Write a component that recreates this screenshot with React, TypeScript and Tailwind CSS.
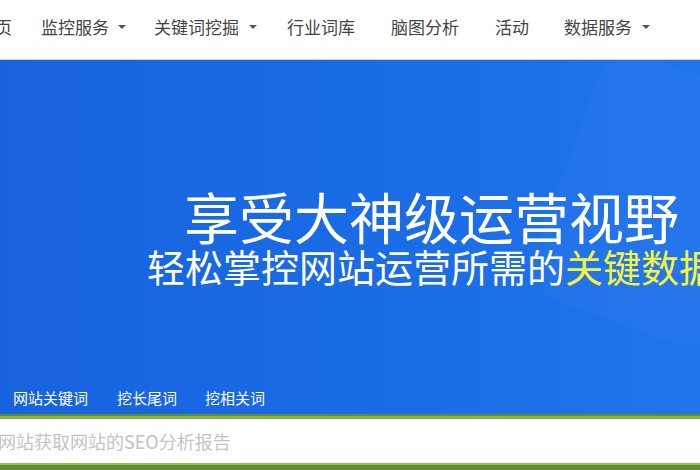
import React from "react";

const font = { fontFamily: '"Noto Sans CJK SC", "Noto Sans", sans-serif' };

const navItems = [
  { label: "首页", ml: "ml-[-22px]", caret: false, caretMl: "" },
  { label: "监控服务", ml: "ml-[29px]", caret: true, caretMl: "ml-[9px]" },
  { label: "关键词挖掘", ml: "ml-[28px]", caret: true, caretMl: "ml-[10px]" },
  { label: "行业词库", ml: "ml-[30px]", caret: false, caretMl: "" },
  { label: "脑图分析", ml: "ml-[36px]", caret: false, caretMl: "" },
  { label: "活动", ml: "ml-[36px]", caret: false, caretMl: "" },
  { label: "数据服务", ml: "ml-[35px]", caret: true, caretMl: "ml-[10px]" },
];

const tabs = [
  { label: "网站关键词", ml: "ml-[13px]" },
  { label: "挖长尾词", ml: "ml-[29px]" },
  { label: "挖相关词", ml: "ml-[28px]" },
];

export default function App() {
  return (
    <div className="h-[470px] w-[700px] overflow-hidden bg-white" style={font}>
      {/* Top nav */}
      <div className="flex h-[60px] items-center whitespace-nowrap border-b border-[#c9d3de] bg-white pb-[6px]">
        {navItems.map((item) => (
          <div key={item.label} className={`flex shrink-0 items-center ${item.ml}`}>
            <span className="text-[17px] leading-none text-[#444]">{item.label}</span>
            {item.caret && (
              <span
                className={`${item.caretMl} h-0 w-0 border-x-[4px] border-t-[4px] border-x-transparent border-t-[#555]`}
              />
            )}
          </div>
        ))}
      </div>

      {/* Hero */}
      <div className="relative h-[354px] overflow-hidden bg-gradient-to-r from-[#1762df] via-[#1a6be6] to-[#2174ec]">
        <div className="absolute right-[-60px] top-[10px] h-[260px] w-[200px] rotate-[20deg] rounded-[40px] bg-white/[0.02]" />

        <div className="relative flex h-full flex-col whitespace-nowrap">
          <div className="ml-[184px] mt-[128px] text-[55px] leading-none text-white">
            享受大神级运营视野
          </div>
          <div className="ml-[147px] mt-[4px] text-[38px] leading-none text-white">
            轻松掌控网站运营所需的<span className="text-[#f4f53a]">关键数据</span>
          </div>
          <div className="mt-auto flex h-[30px] items-center pb-[4px]">
            {tabs.map((t) => (
              <span key={t.label} className={`${t.ml} text-[15px] leading-none text-white`}>
                {t.label}
              </span>
            ))}
          </div>
        </div>
      </div>

      {/* Search */}
      <div className="border-t-[2px] border-[#5f8d34] bg-[#8bb33c] pt-[3px]">
        <div className="flex h-[44px] items-center bg-white whitespace-nowrap">
          <span className="ml-[-2px] text-[18px] leading-none text-[#c4c4c4]">
            网站获取网站的SEO分析报告
          </span>
        </div>
        <div className="h-[2px] bg-[#9cc043]" />
        <div className="h-[5px] bg-[#5f8d3a]" />
      </div>
    </div>
  );
}
